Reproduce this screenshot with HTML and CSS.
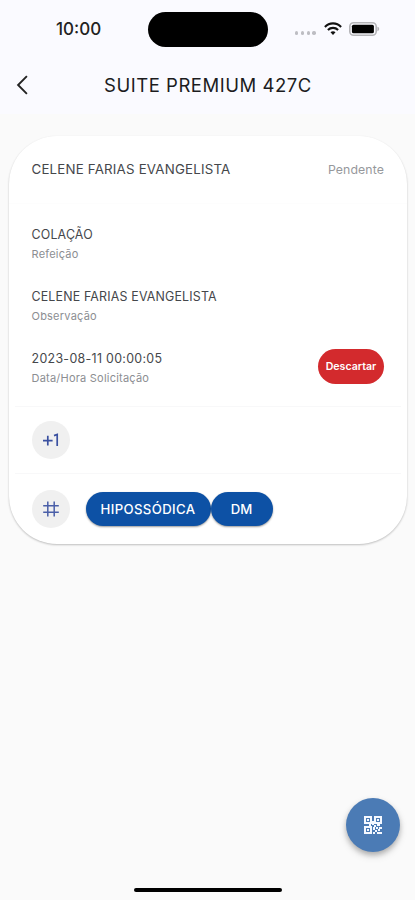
FILE: index.html
```
<!DOCTYPE html>
<html lang="pt-BR">
	<head>
		<meta charset="utf-8">
		<meta name="viewport" content="width=device-width, initial-scale=1">
		<title>Suite Premium 427C</title>
		<link rel="stylesheet" href="styles.css">
	</head>
	<body>
		<header>
			<div class="statusbar">
				<div class="time">10:00</div>
				<div class="island"></div>
				<div class="status">
					<div class="dots"><i></i><i></i><i></i><i></i></div>
					<svg class="wifi" width="18" height="13" viewBox="0 0 18 13" fill="none" stroke="#111" stroke-width="2.1">
						<path d="M0.9 4.9C5.4 0.2 12.6 0.2 17.1 4.9"/>
						<path d="M3.9 8C6.8 5.1 11.2 5.1 14.1 8"/>
						<path d="M9 12.9L6.5 10.3C7.9 9 10.1 9 11.5 10.3Z" fill="#111" stroke="none"/>
					</svg>
					<svg class="battery" width="31" height="14" viewBox="0 0 31 14">
						<rect x="0.8" y="0.8" width="26.4" height="12.4" rx="3.8" fill="none" stroke="#b4b4b8" stroke-width="1.6"/>
						<rect x="2.9" y="2.7" width="22" height="8.6" rx="1.6" fill="#000"/>
						<path d="M28.4 4.8C30.8 5.3 30.8 8.7 28.4 9.2Z" fill="#b4b4b8"/>
					</svg>
				</div>
			</div>
			<div class="navbar">
				<svg class="back" width="12" height="20" viewBox="0 0 12 20" fill="none" stroke="#222" stroke-width="1.9">
					<path d="M10.9 1.2L2.1 10L10.9 18.8"/>
				</svg>
				<h1>SUITE PREMIUM 427C</h1>
			</div>
		</header>

		<div class="card">
			<div class="card-head">
				<span class="patient">CELENE FARIAS EVANGELISTA</span>
				<span class="state">Pendente</span>
			</div>
			<div class="details">
				<div class="item">
					<div class="value">COLAÇÃO</div>
					<div class="label">Refeição</div>
				</div>
				<div class="item">
					<div class="value">CELENE FARIAS EVANGELISTA</div>
					<div class="label">Observação</div>
				</div>
				<div class="item row">
					<div>
						<div class="value date">2023-08-11 00:00:05</div>
						<div class="label">Data/Hora Solicitação</div>
					</div>
					<button class="discard">Descartar</button>
				</div>
			</div>
			<div class="line plus">
				<div class="circle">
					<svg width="18" height="14" viewBox="0 0 18 14" fill="none" stroke="#3a50a0" stroke-width="1.7">
						<path d="M1 7.6H10.6M5.8 2.8V12.4M12 2.6L15.2 1.5V13"/>
					</svg>
				</div>
			</div>
			<div class="line tags">
				<div class="circle">
					<svg width="18" height="18" viewBox="0 0 18 18" fill="none" stroke="#4a5fa8" stroke-width="1.5">
						<path d="M5.8 1.5V16.5M12.2 1.5V16.5M1.2 5.8H16.8M1.2 12.2H16.8"/>
					</svg>
				</div>
				<div class="chips">
					<span class="chip">HIPOSSÓDICA</span>
					<span class="chip small">DM</span>
				</div>
			</div>
		</div>

		<button class="fab" aria-label="QR Code">
			<svg width="18" height="18" viewBox="0 0 18 18" fill="#f4f8ff">
				<path fill-rule="evenodd" d="M0 0H8V8H0ZM2 2V6H6V2ZM10 0H18V8H10ZM12 2V6H16V2ZM0 10H8V18H0ZM2 12V16H6V12Z"/>
				<path d="M3 3H5V5H3ZM13 3H15V5H13ZM3 13H5V15H3ZM5 8H7V10H5ZM8 5H10V9H8ZM10 9H12V11H10ZM13 8H16V10H13ZM12 11H14V13H12ZM15 11H18V13H15ZM9 11H11V14H9ZM11 14H13V16H11ZM14 13H16V15H14ZM9 16H11V18H9ZM13 16H18V18H13Z"/>
			</svg>
		</button>
		<div class="home"></div>
	</body>
</html>
```

FILE: styles.css
```
		html {
			background-color: #fafafa;
		}
		body {
			margin: 0;
			height: 900px;
			overflow: hidden;
			position: relative;
			font-family: Inter, "Liberation Sans", sans-serif;
			color: #45474b;
		}
		button {
			border: none;
			padding: 0;
			font-family: inherit;
			cursor: pointer;
		}
		svg {
			display: block;
		}
		header {
			height: 114px;
			background-color: #fafaff;
		}
		.statusbar {
			display: grid;
			grid-template-columns: 148px 120px 1fr;
			align-items: center;
			height: 58px;
		}
		.time {
			padding-left: 56px;
			font-size: 17px;
			font-weight: 500;
			line-height: 20px;
			color: #222;
		}
		.island {
			height: 35px;
			border-radius: 18px;
			background-color: #000;
		}
		.status {
			display: flex;
			align-items: center;
			padding-left: 27px;
			margin-top: -1px;
		}
		.dots {
			display: flex;
			gap: 2.4px;
			margin-top: 9px;
		}
		.dots i {
			width: 3.4px;
			height: 3.4px;
			border-radius: 50%;
			background-color: #bdbdc3;
		}
		.wifi {
			margin: 0 7px 1px 8px;
		}
		.navbar {
			display: flex;
			align-items: center;
			height: 53px;
			padding-left: 16px;
		}
		h1 {
			margin: 0 0 0 76px;
			font-size: 18.5px;
			font-weight: 400;
			line-height: 24px;
			letter-spacing: 0.53px;
			white-space: nowrap;
			color: #1c1c1e;
		}
		.card {
			box-sizing: border-box;
			height: 408px;
			margin: 22px 8px 0 9px;
			border-radius: 48px;
			background-color: #fff;
			box-shadow: 0 1px 2px rgba(0, 0, 0, 0.2), 0 1px 3px rgba(0, 0, 0, 0.05);
		}
		.card-head {
			display: flex;
			align-items: center;
			justify-content: space-between;
			height: 66px;
			padding: 0 23px 0 22.5px;
		}
		.patient {
			font-size: 13.3px;
			letter-spacing: 0.2px;
		}
		.state {
			font-size: 12.3px;
			letter-spacing: 0.1px;
			color: #96989c;
		}
		.details {
			display: flex;
			flex-direction: column;
			gap: 26px;
			height: 203px;
			box-sizing: border-box;
			padding: 21px 23px 0 22.5px;
			margin-top: 1px;
			border-top: 1px solid #fdfdfd;
		}
		.value {
			font-size: 12.4px;
			line-height: 20px;
			letter-spacing: 0.18px;
		}
		.date {
			letter-spacing: 0.32px;
		}
		.label {
			font-size: 11px;
			line-height: 16px;
			padding-top: 1px;
			margin-bottom: -1px;
			letter-spacing: 0.22px;
			color: #8c8e92;
		}
		.row {
			display: flex;
			justify-content: space-between;
			align-items: center;
		}
		.discard {
			width: 66px;
			height: 35px;
			margin-top: -2px;
			border-radius: 18px;
			background-color: #d32a2d;
			font-size: 10.6px;
			font-weight: 600;
			color: #fff;
		}
		.line {
			display: flex;
			align-items: center;
			height: 66px;
			margin: 0 6px;
			padding-left: 17px;
			border-top: 1px solid #f8f8f9;
		}
		.tags {
			height: 70px;
		}
		.circle {
			display: flex;
			align-items: center;
			justify-content: center;
			width: 38px;
			height: 38px;
			border-radius: 50%;
			background-color: #f0f0f0;
		}
		.chips {
			display: flex;
			margin: -1px 0 0 15.5px;
		}
		.chip {
			width: 125px;
			height: 34px;
			border-radius: 17px;
			background-color: #0d51a5;
			box-shadow: 0 1px 2px rgba(0, 0, 0, 0.4);
			font-size: 13.2px;
			font-weight: 500;
			line-height: 34px;
			letter-spacing: 0.35px;
			text-align: center;
			color: #fff;
		}
		.chip.small {
			width: 62px;
			letter-spacing: 0;
		}
		.fab {
			position: absolute;
			left: 346px;
			top: 798px;
			display: flex;
			align-items: center;
			justify-content: center;
			width: 54px;
			height: 54px;
			border-radius: 50%;
			background-color: #4b7bb5;
			box-shadow: 0 3px 5px rgba(0, 0, 0, 0.22), 0 4px 9px rgba(0, 0, 0, 0.12);
		}
		.home {
			position: absolute;
			left: 134px;
			bottom: 8px;
			width: 148px;
			height: 4px;
			border-radius: 2px;
			background-color: #000;
		}
```
